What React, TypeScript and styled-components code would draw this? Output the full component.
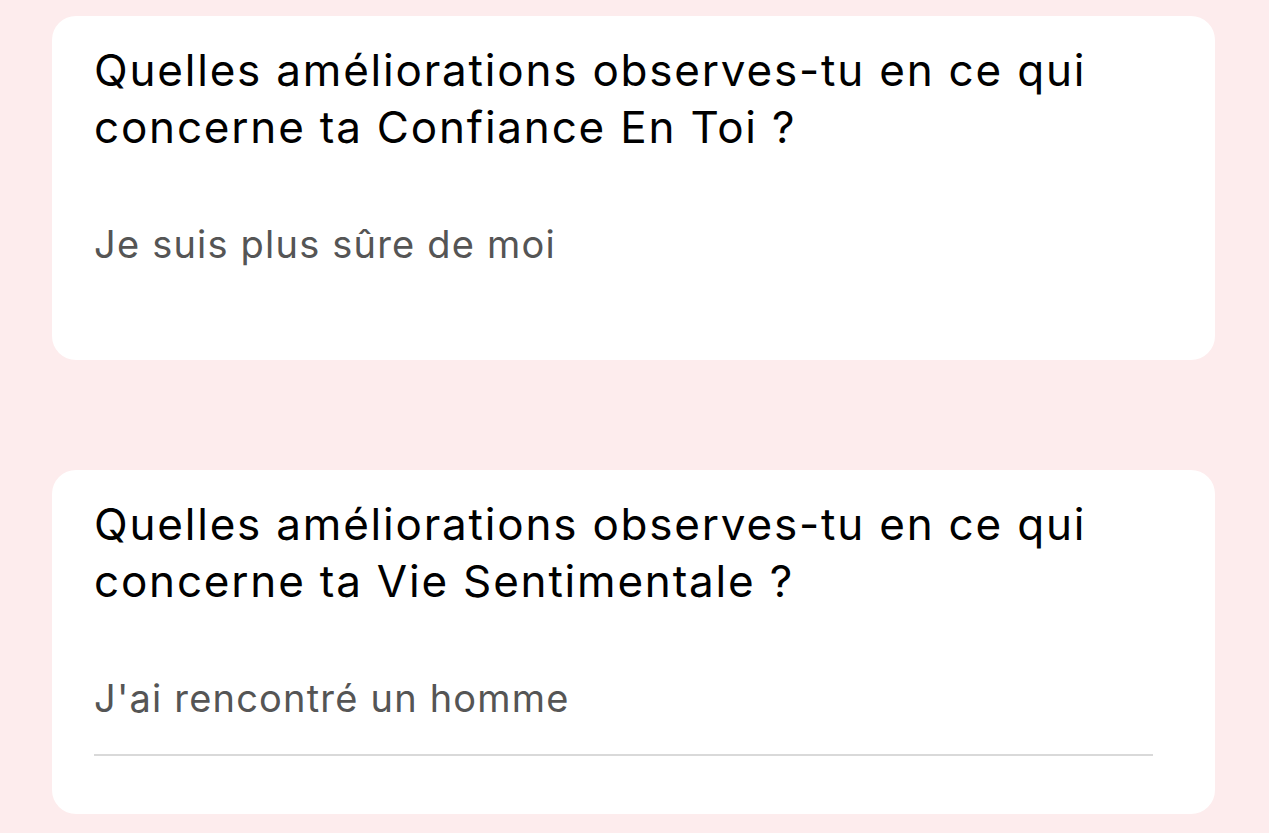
import React from "react";
import styled, { createGlobalStyle } from "styled-components";

const GlobalStyle = createGlobalStyle`
  html, body {
    margin: 0;
    padding: 0;
    background: #fdeced;
  }
  body {
    font-family: Inter, "Liberation Sans", Arial, sans-serif;
  }
`;

type Entry = {
  question: string;
  answer: string;
  underline?: boolean;
};

const entries: Entry[] = [
  {
    question: "Quelles améliorations observes-tu en ce qui concerne ta Confiance En Toi ?",
    answer: "Je suis plus sûre de moi",
  },
  {
    question: "Quelles améliorations observes-tu en ce qui concerne ta Vie Sentimentale ?",
    answer: "J'ai rencontré un homme",
    underline: true,
  },
];

function App() {
  return (
    <>
      <GlobalStyle />
      <Page>
        {entries.map((e) => (
          <Card key={e.question}>
            <Question>{e.question}</Question>
            <Answer $underline={!!e.underline}>{e.answer}</Answer>
          </Card>
        ))}
      </Page>
    </>
  );
}

const Page = styled.div`
  display: flex;
  flex-direction: column;
  gap: 110px;
  padding: 16px 54px 0 52px;
  min-height: 833px;
  box-sizing: border-box;
`;

const Card = styled.div`
  display: flex;
  flex-direction: column;
  background: #ffffff;
  border-radius: 24px;
  height: 344px;
  padding: 26px 62px 0 42px;
  box-sizing: border-box;
`;

const Question = styled.h2`
  margin: 0;
  font-size: 44px;
  font-weight: 400;
  line-height: 57px;
  letter-spacing: 1.8px;
  color: #000000;
`;

const Answer = styled.div<{ $underline: boolean }>`
  margin-top: 64px;
  font-size: 38px;
  line-height: 48px;
  letter-spacing: 1.2px;
  color: #555555;
  padding-bottom: 32px;
  border-bottom: 2px solid ${(p) => (p.$underline ? "#d9d9d9" : "transparent")};
`;

export default App;
